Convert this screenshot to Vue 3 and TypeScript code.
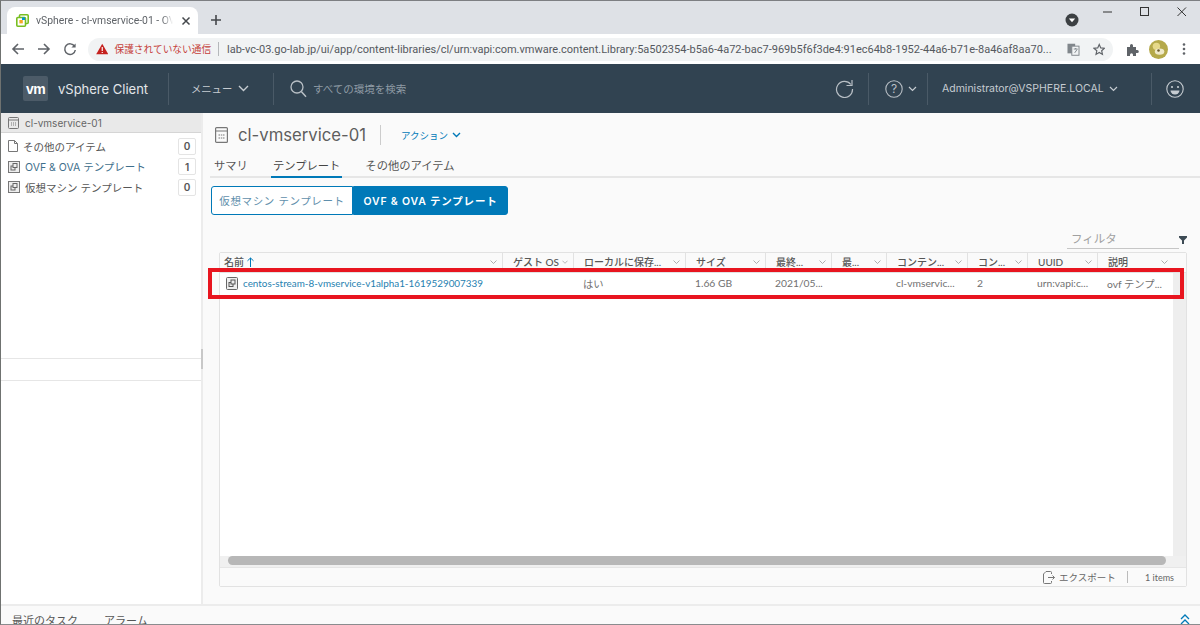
<template>
  <div class="window">
    <div class="tabstrip">
      <div class="tab">
        <svg class="favicon" width="13" height="13" viewBox="0 0 13 13">
          <rect x="3.5" y="0.8" width="8.7" height="8.7" rx="1" fill="none" stroke="#78be20" stroke-width="1.6" />
          <rect x="0.8" y="3.5" width="8.7" height="8.7" rx="1" fill="#fff" stroke="#78be20" stroke-width="1.6" />
          <rect x="3.4" y="6" width="3.4" height="3.4" fill="#f5a623" />
          <rect x="6" y="3.4" width="3" height="2.6" fill="#0095d3" />
        </svg>
        <span class="tab-title">vSphere - cl-vmservice-01 - OVF</span>
        <svg class="tab-close" width="10" height="10" viewBox="0 0 10 10">
          <path d="M1.5 1.5l7 7M8.5 1.5l-7 7" stroke="#45484c" stroke-width="1.5" />
        </svg>
      </div>
      <svg class="tab-new" width="12" height="12" viewBox="0 0 12 12">
        <path d="M6 1v10M1 6h10" stroke="#45484c" stroke-width="1.6" />
      </svg>
      <svg class="profile-drop" width="14" height="14" viewBox="0 0 14 14">
        <circle cx="7" cy="7" r="6.5" fill="#3c4043" />
        <path d="M3.8 5.5h6.4L7 9.2z" fill="#fff" />
      </svg>
      <div class="win-controls">
        <svg width="10" height="10" viewBox="0 0 10 10"><path d="M0 5h9" stroke="#333" stroke-width="1" /></svg>
        <svg width="10" height="10" viewBox="0 0 10 10"><rect x="0.5" y="0.5" width="8" height="8" fill="none" stroke="#333" /></svg>
        <svg width="10" height="10" viewBox="0 0 10 10"><path d="M0.5 0.5l8.5 8.5M9 0.5l-8.5 8.5" stroke="#333" stroke-width="1" /></svg>
      </div>
    </div>

    <div class="toolbar">
      <svg class="tool-btn" width="14" height="14" viewBox="0 0 14 14">
        <path d="M13 7H2M7 2L2 7l5 5" fill="none" stroke="#5f6368" stroke-width="1.6" />
      </svg>
      <svg class="tool-btn" width="14" height="14" viewBox="0 0 14 14">
        <path d="M1 7h11M7 2l5 5-5 5" fill="none" stroke="#5f6368" stroke-width="1.6" />
      </svg>
      <svg class="tool-btn" width="14" height="14" viewBox="0 0 14 14">
        <path d="M11.6 4.4A5.3 5.3 0 1 0 12.3 8" fill="none" stroke="#5f6368" stroke-width="1.5" />
        <path d="M12.6 1.4v4.2H8.4z" fill="#5f6368" />
      </svg>
      <div class="omnibox">
        <svg width="13" height="12" viewBox="0 0 13 12">
          <path d="M6.5 0.5L12.8 11.5H0.2z" fill="#c5221f" />
          <path d="M6.5 4v4M6.5 9v1.2" stroke="#fff" stroke-width="1.2" />
        </svg>
        <span class="insecure">保護されていない通信</span>
        <span class="omni-sep"></span>
        <span class="url">{{ pageUrl }}</span>
        <svg class="translate" width="13" height="13" viewBox="0 0 13 13">
          <rect x="0.5" y="0.5" width="8" height="10" fill="#80868b" />
          <rect x="5" y="3" width="7.5" height="9.5" fill="#f1f3f4" stroke="#80868b" />
          <path d="M7 6h4M9 5v1M8 10l2.500-3.500" stroke="#80868b" fill="none" />
        </svg>
        <svg class="star" width="13" height="13" viewBox="0 0 14 14">
          <path d="M7 1.3l1.700 3.900 4.200.4-3.200 2.800.9 4.100L7 10.400l-3.600 2.100.9-4.100L1.100 5.600l4.200-.4z" fill="none" stroke="#5f6368" stroke-width="1.300" />
        </svg>
      </div>
      <svg class="puzzle" width="13" height="13" viewBox="0 0 13 13">
        <path d="M1 4h3V2.600a1.500 1.500 0 0 1 3 0V4h3v3h1.300a1.500 1.500 0 0 1 0 3H10v3H7v-1.300a1.500 1.500 0 0 0-3 0V13H1z" fill="#5f6368" />
      </svg>
      <svg class="avatar" width="19" height="19" viewBox="0 0 18 18">
        <circle cx="9" cy="9" r="9" fill="#b5a94a" />
        <circle cx="7" cy="6" r="3.500" fill="#e6d98a" />
        <ellipse cx="10" cy="11" rx="4.500" ry="3" fill="#efe9c8" />
        <circle cx="9" cy="10" r="1.200" fill="#6b5a2a" />
      </svg>
      <svg class="kebab" width="4" height="14" viewBox="0 0 4 14">
        <circle cx="2" cy="2.500" r="1.300" fill="#5f6368" />
        <circle cx="2" cy="7" r="1.300" fill="#5f6368" />
        <circle cx="2" cy="11.500" r="1.300" fill="#5f6368" />
      </svg>
    </div>

    <header class="appbar">
      <div class="brand">
        <span class="vm-logo">vm</span>
        <span class="brand-name">vSphere Client</span>
      </div>
      <div class="menu">
        <span>メニュー</span>
        <svg width="11" height="7" viewBox="0 0 11 7"><path d="M1 1l4.500 4.500L10 1" fill="none" stroke="#c6ccd1" stroke-width="1.400" /></svg>
      </div>
      <div class="search">
        <svg width="17" height="18" viewBox="0 0 17 18">
          <circle cx="7" cy="7" r="6" fill="none" stroke="#b8bfc5" stroke-width="1.300" />
          <path d="M11.300 11.500L16 16.800" stroke="#b8bfc5" stroke-width="1.500" />
        </svg>
        <span>すべての環境を検索</span>
      </div>
      <div class="refresh">
        <svg width="19" height="19" viewBox="0 0 19 19">
          <path d="M15.800 5.500A8 8 0 1 0 17.500 10" fill="none" stroke="#b8bfc5" stroke-width="1.200" />
          <path d="M17 1v5.500h-5.500" fill="none" stroke="#b8bfc5" stroke-width="1.200" />
        </svg>
      </div>
      <div class="help">
        <svg width="18" height="18" viewBox="0 0 18 18">
          <circle cx="9" cy="9" r="8.200" fill="none" stroke="#b8bfc5" stroke-width="1.100" />
          <text x="9" y="13.200" text-anchor="middle" class="help-mark">?</text>
        </svg>
        <svg width="9" height="6" viewBox="0 0 9 6"><path d="M1 1l3.500 3.500L8 1" fill="none" stroke="#c6ccd1" stroke-width="1.200" /></svg>
      </div>
      <div class="user">
        <span>Administrator@VSPHERE.LOCAL</span>
        <svg width="9" height="6" viewBox="0 0 9 6"><path d="M1 1l3.500 3.500L8 1" fill="none" stroke="#c6ccd1" stroke-width="1.200" /></svg>
      </div>
      <div class="smile">
        <svg width="18" height="18" viewBox="0 0 18 18">
          <circle cx="9" cy="9" r="8.200" fill="none" stroke="#c6ccd1" stroke-width="1.100" />
          <circle cx="6" cy="7" r="1.100" fill="#c6ccd1" />
          <circle cx="12" cy="7" r="1.100" fill="#c6ccd1" />
          <path d="M4.500 10.500h9a4.500 4 0 0 1-9 0z" fill="#c6ccd1" />
        </svg>
      </div>
    </header>

    <div class="body">
      <aside class="sidebar">
        <div class="side-head">
          <svg class="lib-icon" width="11" height="12" viewBox="0 0 11 12">
            <rect x="0.500" y="0.500" width="10" height="11" rx="1" fill="none" stroke="#777" />
            <path d="M0.500 3h10M3 6h1M5 6h1M7 6h1M3 8h1M5 8h1M7 8h1" stroke="#777" />
          </svg>
          <span>cl-vmservice-01</span>
        </div>
        <ul class="side-list">
          <li v-for="item in sideItems" :key="item.label" class="side-item">
            <svg v-if="item.kind === 'file'" width="10" height="12" viewBox="0 0 10 12">
              <path d="M0.500 0.500h6l3 3v8h-9zM6.500 0.500v3h3" fill="none" stroke="#777" />
            </svg>
            <svg v-else width="12" height="12" viewBox="0 0 12 12">
              <rect x="0.500" y="0.500" width="11" height="11" fill="#eee" stroke="#777" />
              <rect x="3" y="5" width="4" height="4" fill="none" stroke="#666" />
              <rect x="5" y="2.500" width="4" height="4" fill="#eee" stroke="#666" />
            </svg>
            <span class="side-label" :class="{ linked: item.count > 0 }">{{ item.label }}</span>
            <span class="side-count">{{ item.count }}</span>
          </li>
        </ul>
        <div class="side-band"></div>
        <div class="side-rest"></div>
      </aside>
      <div class="splitter"><span class="splitter-thumb"></span></div>

      <main class="content">
        <div class="title-row">
          <svg width="13" height="16" viewBox="0 0 13 16">
            <rect x="0.600" y="0.600" width="11.800" height="14.800" rx="1" fill="none" stroke="#777" stroke-width="1.200" />
            <path d="M0.600 4h11.800M3.500 8h1.500M5.800 8h1.500M8 8h1.500M3.500 11h1.500M5.800 11h1.500M8 11h1.500" stroke="#777" />
          </svg>
          <h1>cl-vmservice-01</h1>
          <span class="title-sep"></span>
          <span class="actions">アクション</span>
          <svg width="9" height="6" viewBox="0 0 9 6"><path d="M1 1l3.500 3.500L8 1" fill="none" stroke="#0079b8" stroke-width="1.400" /></svg>
        </div>
        <nav class="tabs">
          <span class="tab-link">サマリ</span>
          <span class="tab-link active">テンプレート</span>
          <span class="tab-link">その他のアイテム</span>
        </nav>
        <div class="segments">
          <button class="segment">仮想マシン テンプレート</button>
          <button class="segment selected">OVF &amp; OVA テンプレート</button>
        </div>
        <div class="filter-row">
          <span class="filter-input">フィルタ</span>
          <svg width="8" height="8" viewBox="0 0 8 8"><path d="M0 0h8v1.500L5 4.500V8H3V4.500L0 1.500z" fill="#3c4a54" /></svg>
        </div>

        <section class="grid">
          <div class="grid-head">
            <div v-for="col in columns" :key="col.title" class="head-cell" :style="{ width: col.width + 'px' }">
              <span class="head-title">{{ col.title }}</span>
              <svg v-if="col.sorted" width="7" height="10" viewBox="0 0 7 10"><path d="M3.500 10V1M0.500 3.800L3.500 1l3 2.800" fill="none" stroke="#0079b8" /></svg>
              <svg class="head-caret" width="7" height="4" viewBox="0 0 7 4"><path d="M0.500 0.500l3 3 3-3" fill="none" stroke="#999" stroke-width="0.800" /></svg>
            </div>
          </div>
          <div class="grid-body">
            <div class="rows">
              <div class="row">
                <div v-for="col in columns" :key="col.title" class="cell" :class="{ link: col.sorted }" :style="{ width: col.width + 'px' }">
                  <svg v-if="col.sorted" width="12" height="13" viewBox="0 0 12 13">
                    <rect x="0.500" y="0.500" width="11" height="12" rx="1" fill="#eee" stroke="#666" />
                    <rect x="3" y="5.500" width="4" height="4" fill="none" stroke="#555" />
                    <rect x="5" y="3" width="4" height="4" fill="#eee" stroke="#555" />
                  </svg>
                  <span>{{ col.value }}</span>
                </div>
              </div>
            </div>
            <div class="v-gutter"></div>
          </div>
          <div class="h-gutter"><span class="h-thumb"></span></div>
          <div class="grid-foot">
            <svg width="12" height="13" viewBox="0 0 12 13">
              <path d="M8.500 3V1.500a1 1 0 0 0-1-1H3L0.500 3v8.500a1 1 0 0 0 1 1h6a1 1 0 0 0 1-1V10M5 6.500h6.500M9.500 4.500l2 2-2 2" fill="none" stroke="#777" />
            </svg>
            <span class="export">エクスポート</span>
            <span class="foot-sep"></span>
            <span class="count">1 items</span>
          </div>
        </section>

        <div class="highlight"></div>
      </main>
    </div>

    <footer class="tasks">
      <span>最近のタスク</span>
      <span>アラーム</span>
      <svg class="tasks-toggle" width="10" height="11" viewBox="0 0 10 11">
        <path d="M1 5l4-4 4 4M1 10l4-4 4 4" fill="none" stroke="#0079b8" stroke-width="1.300" />
      </svg>
    </footer>
  </div>
</template>

<script setup lang="ts">
interface Column {
  title: string;
  width: number;
  value: string;
  sorted?: boolean;
}

interface SideItem {
  label: string;
  count: number;
  kind: "file" | "template";
}

const pageUrl =
  "lab-vc-03.go-lab.jp/ui/app/content-libraries/cl/urn:vapi:com.vmware.content.Library:5a502354-b5a6-4a72-bac7-969b5f6f3de4:91ec64b8-1952-44a6-b71e-8a46af8aa70...";

const sideItems: SideItem[] = [
  { label: "その他のアイテム", count: 0, kind: "file" },
  { label: "OVF & OVA テンプレート", count: 1, kind: "template" },
  { label: "仮想マシン テンプレート", count: 0, kind: "template" },
];

const columns: Column[] = [
  { title: "名前", width: 282, value: "centos-stream-8-vmservice-v1alpha1-1619529007339", sorted: true },
  { title: "ゲスト OS", width: 71, value: "" },
  { title: "ローカルに保存...", width: 112, value: "はい" },
  { title: "サイズ", width: 80, value: "1.66 GB" },
  { title: "最終...", width: 66, value: "2021/05..." },
  { title: "最...", width: 55, value: "" },
  { title: "コンテン...", width: 81, value: "cl-vmservic..." },
  { title: "コン...", width: 60, value: "2" },
  { title: "UUID", width: 70, value: "urn:vapi:c..." },
  { title: "説明", width: 76, value: "ovf テンプ..." },
];
</script>

<style>
html,
body {
  margin: 0;
  background: #fff;
}
</style>

<style scoped>
.window {
  width: 1200px;
  height: 625px;
  overflow: hidden;
  display: flex;
  flex-direction: column;
  box-sizing: border-box;
  border-top: 1px solid #7d7f82;
  border-left: 1px solid #6f7270;
  border-bottom: 1px solid #8a8c8e;
  font-family: Inter, "Noto Sans CJK JP", sans-serif;
  color: #565656;
}

.tabstrip {
  height: 33px;
  flex: none;
  display: flex;
  align-items: flex-start;
  background: #dee1e6;
}

.tab {
  width: 191px;
  height: 27px;
  margin-top: 6px;
  margin-left: 6px;
  padding: 0 7px 0 9px;
  box-sizing: border-box;
  display: flex;
  align-items: center;
  background: #fff;
  border-radius: 8px 8px 0 0;
}

.tab-title {
  margin-left: 7px;
  width: 137px;
  overflow: hidden;
  white-space: nowrap;
  font-family: Roboto, sans-serif;
  font-size: 10.4px;
  color: #5f6368;
  mask-image: linear-gradient(to right, #000 92%, transparent);
}

.tab-close {
  margin-left: 8px;
}

.tab-new {
  margin: 13px 0 0 12px;
}

.profile-drop {
  margin: 12px 0 0 843px;
}

.win-controls {
  display: flex;
  gap: 27px;
  margin: 6px 0 0 24px;
}

.toolbar {
  height: 30px;
  flex: none;
  display: flex;
  align-items: center;
  background: #fff;
  padding-left: 10px;
  box-sizing: border-box;
}

.tool-btn {
  margin-right: 12px;
}

.omnibox {
  width: 1025px;
  height: 23px;
  margin-left: -1px;
  padding: 0 8px;
  box-sizing: border-box;
  display: flex;
  align-items: center;
  background: #f1f3f4;
  border-radius: 12px;
  font-family: Roboto, "Noto Sans CJK JP", sans-serif;
  font-size: 11px;
  white-space: nowrap;
}

.insecure {
  margin-left: 6px;
  color: #c5403a;
  font-size: 9.7px;
}

.omni-sep {
  width: 1px;
  height: 14px;
  margin: 0 8px 0 7px;
  background: #b5b8bb;
}

.url {
  width: 829px;
  flex: none;
  overflow: hidden;
  color: #55595e;
}

.translate {
  margin-left: 11px;
}

.star {
  margin-left: 13px;
}

.puzzle {
  margin-left: 13px;
}

.avatar {
  margin-left: 10px;
}

.kebab {
  margin-left: 14px;
}

.appbar {
  height: 49px;
  flex: none;
  display: flex;
  align-items: center;
  background: #314351;
  color: #c6ccd1;
}

.brand {
  width: 167px;
  padding-left: 22px;
  box-sizing: border-box;
  display: flex;
  align-items: center;
}

.vm-logo {
  width: 25px;
  height: 25px;
  display: flex;
  align-items: center;
  justify-content: center;
  background: #4c5b68;
  border-radius: 2px;
  font-family: "Liberation Sans", sans-serif;
  font-weight: 700;
  font-size: 14px;
  letter-spacing: -0.500px;
  color: #fff;
}

.brand-name {
  margin-left: 10px;
  font-size: 13px;
  color: #e3e6e9;
  white-space: nowrap;
}

.menu,
.help,
.user,
.smile,
.refresh {
  height: 32px;
  display: flex;
  align-items: center;
  box-sizing: border-box;
  border-left: 1px solid #4a5a67;
}

.menu {
  width: 105px;
  padding-left: 22px;
  gap: 6px;
  font-size: 10.300px;
}

.search {
  width: 562px;
  height: 32px;
  display: flex;
  align-items: center;
  gap: 6px;
  padding-left: 16px;
  box-sizing: border-box;
  border-left: 1px solid #4a5a67;
  font-size: 10.500px;
  color: #8f9ba5;
}

.refresh {
  width: 34px;
  border-left: none;
}

.help {
  width: 59px;
  margin-left: -1px;
  padding-left: 16px;
  gap: 5px;
}

.help-mark {
  font-size: 12px;
  fill: #b8bfc5;
}

.user {
  width: 224px;
  padding-left: 14px;
  gap: 5px;
  font-size: 10.500px;
  white-space: nowrap;
}

.smile {
  flex: 1;
  padding-left: 14px;
}

.body {
  flex: 1;
  min-height: 0;
  display: flex;
}

.sidebar {
  width: 200px;
  flex: none;
  display: flex;
  flex-direction: column;
  background: #fff;
}

.side-head {
  height: 19px;
  flex: none;
  display: flex;
  align-items: center;
  gap: 6px;
  padding-left: 7px;
  background: #e9e9e9;
  border-bottom: 1px solid #d5d5d5;
  font-size: 10px;
  color: #666;
}

.side-list {
  list-style: none;
  margin: 0;
  padding: 3px 5px 0 7px;
  height: 225px;
  box-sizing: border-box;
  flex: none;
}

.side-item {
  height: 20.500px;
  display: flex;
  align-items: center;
  gap: 5px;
  font-size: 10.500px;
  color: #565656;
}

.side-label {
  flex: 1;
  white-space: nowrap;
}

.side-label.linked {
  color: #3f6f8c;
}

.side-count {
  width: 18px;
  height: 17px;
  display: flex;
  align-items: center;
  justify-content: center;
  box-sizing: border-box;
  border: 1px solid #e4e4e4;
  border-radius: 2px;
  font-size: 10px;
  font-weight: 600;
}

.side-band {
  height: 21px;
  flex: none;
  border-top: 1px solid #e6e6e6;
  border-bottom: 1px solid #e6e6e6;
}

.side-rest {
  flex: 1;
}

.splitter {
  width: 2px;
  flex: none;
  background: #ececec;
  position: relative;
}

.splitter-thumb {
  position: absolute;
  top: 236px;
  left: 0;
  width: 2px;
  height: 20px;
  background: #c8c8c8;
}

.content {
  flex: 1;
  min-width: 0;
  position: relative;
  padding-left: 8px;
  background: #fafafa;
  display: flex;
  flex-direction: column;
}

.title-row {
  height: 40px;
  padding-top: 3px;
  box-sizing: border-box;
  flex: none;
  display: flex;
  align-items: center;
  padding-left: 4px;
}

.title-row h1 {
  margin: 0 0 0 10px;
  width: 142px;
  font-weight: 400;
  font-size: 16.700px;
  color: #5e5e5e;
  white-space: nowrap;
}

.title-sep {
  width: 1px;
  height: 20px;
  background: #ccc;
}

.actions {
  margin: 0 4px 0 20px;
  font-size: 9.500px;
  color: #0079b8;
}

.tabs {
  height: 25px;
  flex: none;
  display: flex;
  gap: 25px;
  padding-left: 4px;
  margin-left: -1px;
  box-sizing: border-box;
  border-bottom: 2px solid #e6e6e6;
}

.tab-link {
  height: 25px;
  box-sizing: border-box;
  padding-top: 4px;
  font-size: 11.300px;
  color: #565656;
  white-space: nowrap;
}

.tab-link.active {
  padding: 4px 2px 0;
  margin: 0 -2px;
  border-bottom: 2px solid #0079b8;
  color: #444;
}

.segments {
  flex: none;
  display: flex;
  margin-top: 8px;
  width: 297px;
}

.segment {
  height: 29px;
  padding: 0;
  box-sizing: border-box;
  background: #fff;
  border: 1px solid #0079b8;
  border-radius: 3px 0 0 3px;
  width: 142px;
  font-family: inherit;
  font-size: 10.500px;
  letter-spacing: 0.600px;
  color: #5f8fac;
}

.segment.selected {
  width: 155px;
  background: #0079b8;
  border-radius: 0 3px 3px 0;
  color: #fff;
  font-weight: 600;
  letter-spacing: 0.800px;
}

.filter-row {
  height: 19px;
  flex: none;
  margin: 15px 0 0 856px;
  display: flex;
  align-items: center;
}

.filter-input {
  width: 112px;
  height: 19px;
  padding-left: 4px;
  box-sizing: border-box;
  border-bottom: 1px solid #c6c6c6;
  font-size: 11.500px;
  color: #a0a0a0;
}

.grid {
  width: 968px;
  height: 335px;
  flex: none;
  margin: 3px 0 0 8px;
  box-sizing: border-box;
  display: flex;
  flex-direction: column;
  background: #fff;
  border: 1px solid #e2e2e2;
  border-radius: 2px;
}

.grid-head {
  height: 19px;
  flex: none;
  display: flex;
  background: #fafafa;
  border-bottom: 1px solid #e2e2e2;
}

.head-cell {
  height: 100%;
  flex: none;
  display: flex;
  align-items: center;
  gap: 3px;
  padding: 0 5px 2px 10px;
  box-sizing: border-box;
  border-left: 1px solid #e2e2e2;
  font-family: Lato, "Noto Sans CJK JP", sans-serif;
  font-size: 10px;
  font-weight: 500;
  color: #565656;
  white-space: nowrap;
}

.head-cell:first-child {
  padding-left: 4px;
  border-left: none;
}

.head-caret {
  margin-left: auto;
}

.grid-body {
  flex: 1;
  min-height: 0;
  display: flex;
}

.rows {
  flex: 1;
}

.row {
  height: 22px;
  display: flex;
  border-bottom: 1px solid #e6e6e6;
}

.cell {
  flex: none;
  display: flex;
  align-items: center;
  gap: 5px;
  padding: 0 0 2px 10px;
  box-sizing: border-box;
  font-family: Lato, "Noto Sans CJK JP", sans-serif;
  font-size: 10.300px;
  color: #707070;
  white-space: nowrap;
  overflow: hidden;
}

.cell.link {
  padding-left: 6px;
  font-size: 9.900px;
  color: #1f7fb0;
}

.v-gutter {
  width: 13px;
  flex: none;
  background: #eeeeee;
}

.h-gutter {
  height: 11px;
  flex: none;
  padding-left: 8px;
  background: #f0f0f0;
}

.h-thumb {
  display: block;
  width: 938px;
  height: 9px;
  background: #b7b7b7;
  border-radius: 5px;
}

.grid-foot {
  height: 18px;
  flex: none;
  display: flex;
  align-items: center;
  padding-left: 823px;
  background: #fafafa;
  border-top: 1px solid #e6e6e6;
  font-size: 9.500px;
  color: #666;
}

.export {
  margin-left: 4px;
  width: 68px;
  white-space: nowrap;
}

.foot-sep {
  width: 1px;
  height: 12px;
  background: #bbb;
}

.count {
  margin-left: 17px;
  font-family: Lato, sans-serif;
  font-size: 9px;
  white-space: nowrap;
}

.highlight {
  position: absolute;
  left: 5px;
  top: 155px;
  width: 976px;
  height: 31px;
  box-sizing: border-box;
  border: 4px solid #e8151f;
}

.tasks {
  height: 20px;
  flex: none;
  display: flex;
  gap: 26px;
  padding: 6px 10px 0 11px;
  box-sizing: border-box;
  background: #fafafa;
  border-top: 2px solid #ececec;
  font-size: 11px;
  color: #565656;
  white-space: nowrap;
}

.tasks-toggle {
  margin-left: auto;
  margin-top: 2px;
}
</style>
